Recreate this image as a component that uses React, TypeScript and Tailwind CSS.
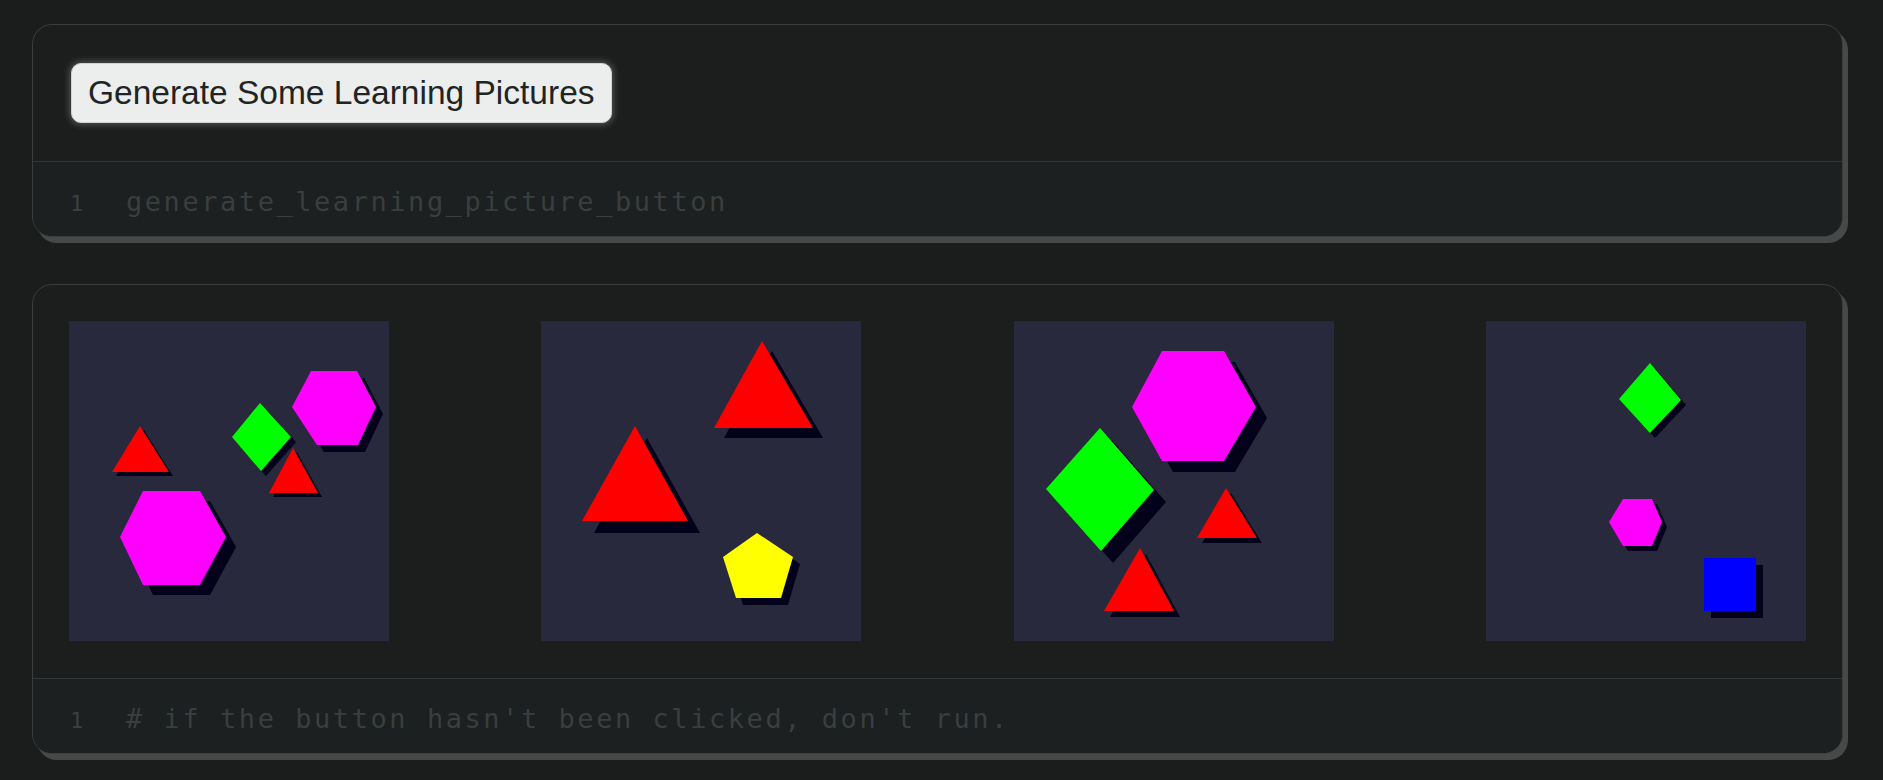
import React from "react";

type Shape = {
  kind: "poly" | "rect";
  pts?: [number, number][];
  rect?: [number, number, number, number];
  fill: string;
  off: number;
};

const RED = "#ff0000";
const MAG = "#ff00ff";
const GRN = "#00ff00";
const YEL = "#ffff00";
const BLU = "#0000ff";

// shapes per picture, in the picture's own 320x320 space
const PICTURES: Shape[][] = [
  [
    { kind: "poly", fill: RED, off: 4, pts: [[71, 105], [43, 151], [100, 151]] },
    { kind: "poly", fill: GRN, off: 5, pts: [[191, 82], [222, 116], [192, 150], [163, 116]] },
    { kind: "poly", fill: RED, off: 4, pts: [[224, 127], [200, 172], [249, 172]] },
    { kind: "poly", fill: MAG, off: 7, pts: [[242, 50], [288, 50], [307, 86], [289, 124], [248, 124], [223, 86]] },
    { kind: "poly", fill: MAG, off: 10, pts: [[74, 170], [131, 170], [157, 216], [131, 264], [74, 264], [51, 216]] },
  ],
  [
    { kind: "poly", fill: RED, off: 10, pts: [[221, 20], [173, 107], [272, 107]] },
    { kind: "poly", fill: RED, off: 12, pts: [[94, 105], [41, 200], [147, 200]] },
    { kind: "poly", fill: YEL, off: 7, pts: [[216, 212], [252, 236], [240, 277], [195, 277], [182, 236]] },
  ],
  [
    { kind: "poly", fill: MAG, off: 11, pts: [[148, 30], [210, 30], [242, 86], [210, 140], [148, 140], [118, 86]] },
    { kind: "poly", fill: GRN, off: 12, pts: [[86, 107], [140, 169], [87, 230], [32, 168]] },
    { kind: "poly", fill: RED, off: 5, pts: [[212, 167], [183, 217], [243, 217]] },
    { kind: "poly", fill: RED, off: 6, pts: [[126, 227], [90, 290], [160, 290]] },
  ],
  [
    { kind: "poly", fill: GRN, off: 5, pts: [[164, 42], [195, 79], [164, 112], [133, 78]] },
    { kind: "poly", fill: MAG, off: 5, pts: [[137, 178], [166, 178], [176, 201], [166, 225], [137, 225], [123, 201]] },
    { kind: "rect", fill: BLU, off: 7, rect: [218, 237, 52, 53] },
  ],
];

const SHADOW = "#04021a";

function Picture({ shapes }: { shapes: Shape[] }) {
  return (
    <svg width="320" height="320" viewBox="0 0 320 320" className="block shrink-0">
      <rect width="320" height="320" fill="#28293d" />
      {shapes.map((s, i) => {
        if (s.kind === "rect" && s.rect) {
          const [x, y, w, h] = s.rect;
          return (
            <g key={i}>
              <rect x={x + s.off} y={y + s.off} width={w} height={h} fill={SHADOW} />
              <rect x={x} y={y} width={w} height={h} fill={s.fill} />
            </g>
          );
        }
        const p = s.pts!.map(([x, y]) => `${x},${y}`).join(" ");
        const sp = s.pts!.map(([x, y]) => `${x + s.off},${y + s.off}`).join(" ");
        return (
          <g key={i}>
            <polygon points={sp} fill={SHADOW} />
            <polygon points={p} fill={s.fill} />
          </g>
        );
      })}
    </svg>
  );
}

function CodeLines({ lines }: { lines: string[] }) {
  return (
    <div className="h-[74px] overflow-hidden bg-[#1d2020] pl-[37px] pt-[17px] font-['DejaVu_Sans_Mono',monospace]">
      {lines.map((l, i) => (
        <div key={i} className="flex h-[46px] items-baseline whitespace-pre leading-[46px]">
          <span className="w-[56px] shrink-0 text-[22px] text-[#3c4040]">{i + 1}</span>
          <span className="text-[27px] tracking-[2.55px] text-[#3a3e3e]">{l}</span>
        </div>
      ))}
    </div>
  );
}

function Cell({ children, lines }: { children: React.ReactNode; lines: string[] }) {
  return (
    <div className="overflow-hidden rounded-[20px] border border-[#3a3d3c] bg-[#1b1e1d] shadow-[5px_6px_0_0_#474948]">
      {children}
      <div className="h-px bg-[#343736]" />
      <CodeLines lines={lines} />
    </div>
  );
}

export default function App() {
  return (
    <div className="min-h-[780px] bg-[#1a1d1c] pb-[20px] pl-[32px] pr-[40px] pt-[24px] font-['Liberation_Sans',Arial,sans-serif]">
      <div className="flex flex-col gap-[47px]">
        <Cell lines={["generate_learning_picture_button"]}>
          <div className="flex h-[136px] items-center pl-[38px]">
            <button className="h-[60px] rounded-[10px] border border-[#cfd2d1] bg-[#eceeed] px-[16px] text-[33.5px] leading-none text-[#1f2424] shadow-[0_0_6px_2px_rgba(255,255,255,0.22)]">
              Generate Some Learning Pictures
            </button>
          </div>
        </Cell>

        <Cell
          lines={[
            "# if the button hasn't been clicked, don't run.",
            "mo.stop(not generate_learning_picture_button.value)",
          ]}
        >
          <div className="flex justify-between px-[36px] pb-[37px] pt-[36px]">
            {PICTURES.map((shapes, i) => (
              <Picture key={i} shapes={shapes} />
            ))}
          </div>
        </Cell>
      </div>
    </div>
  );
}
